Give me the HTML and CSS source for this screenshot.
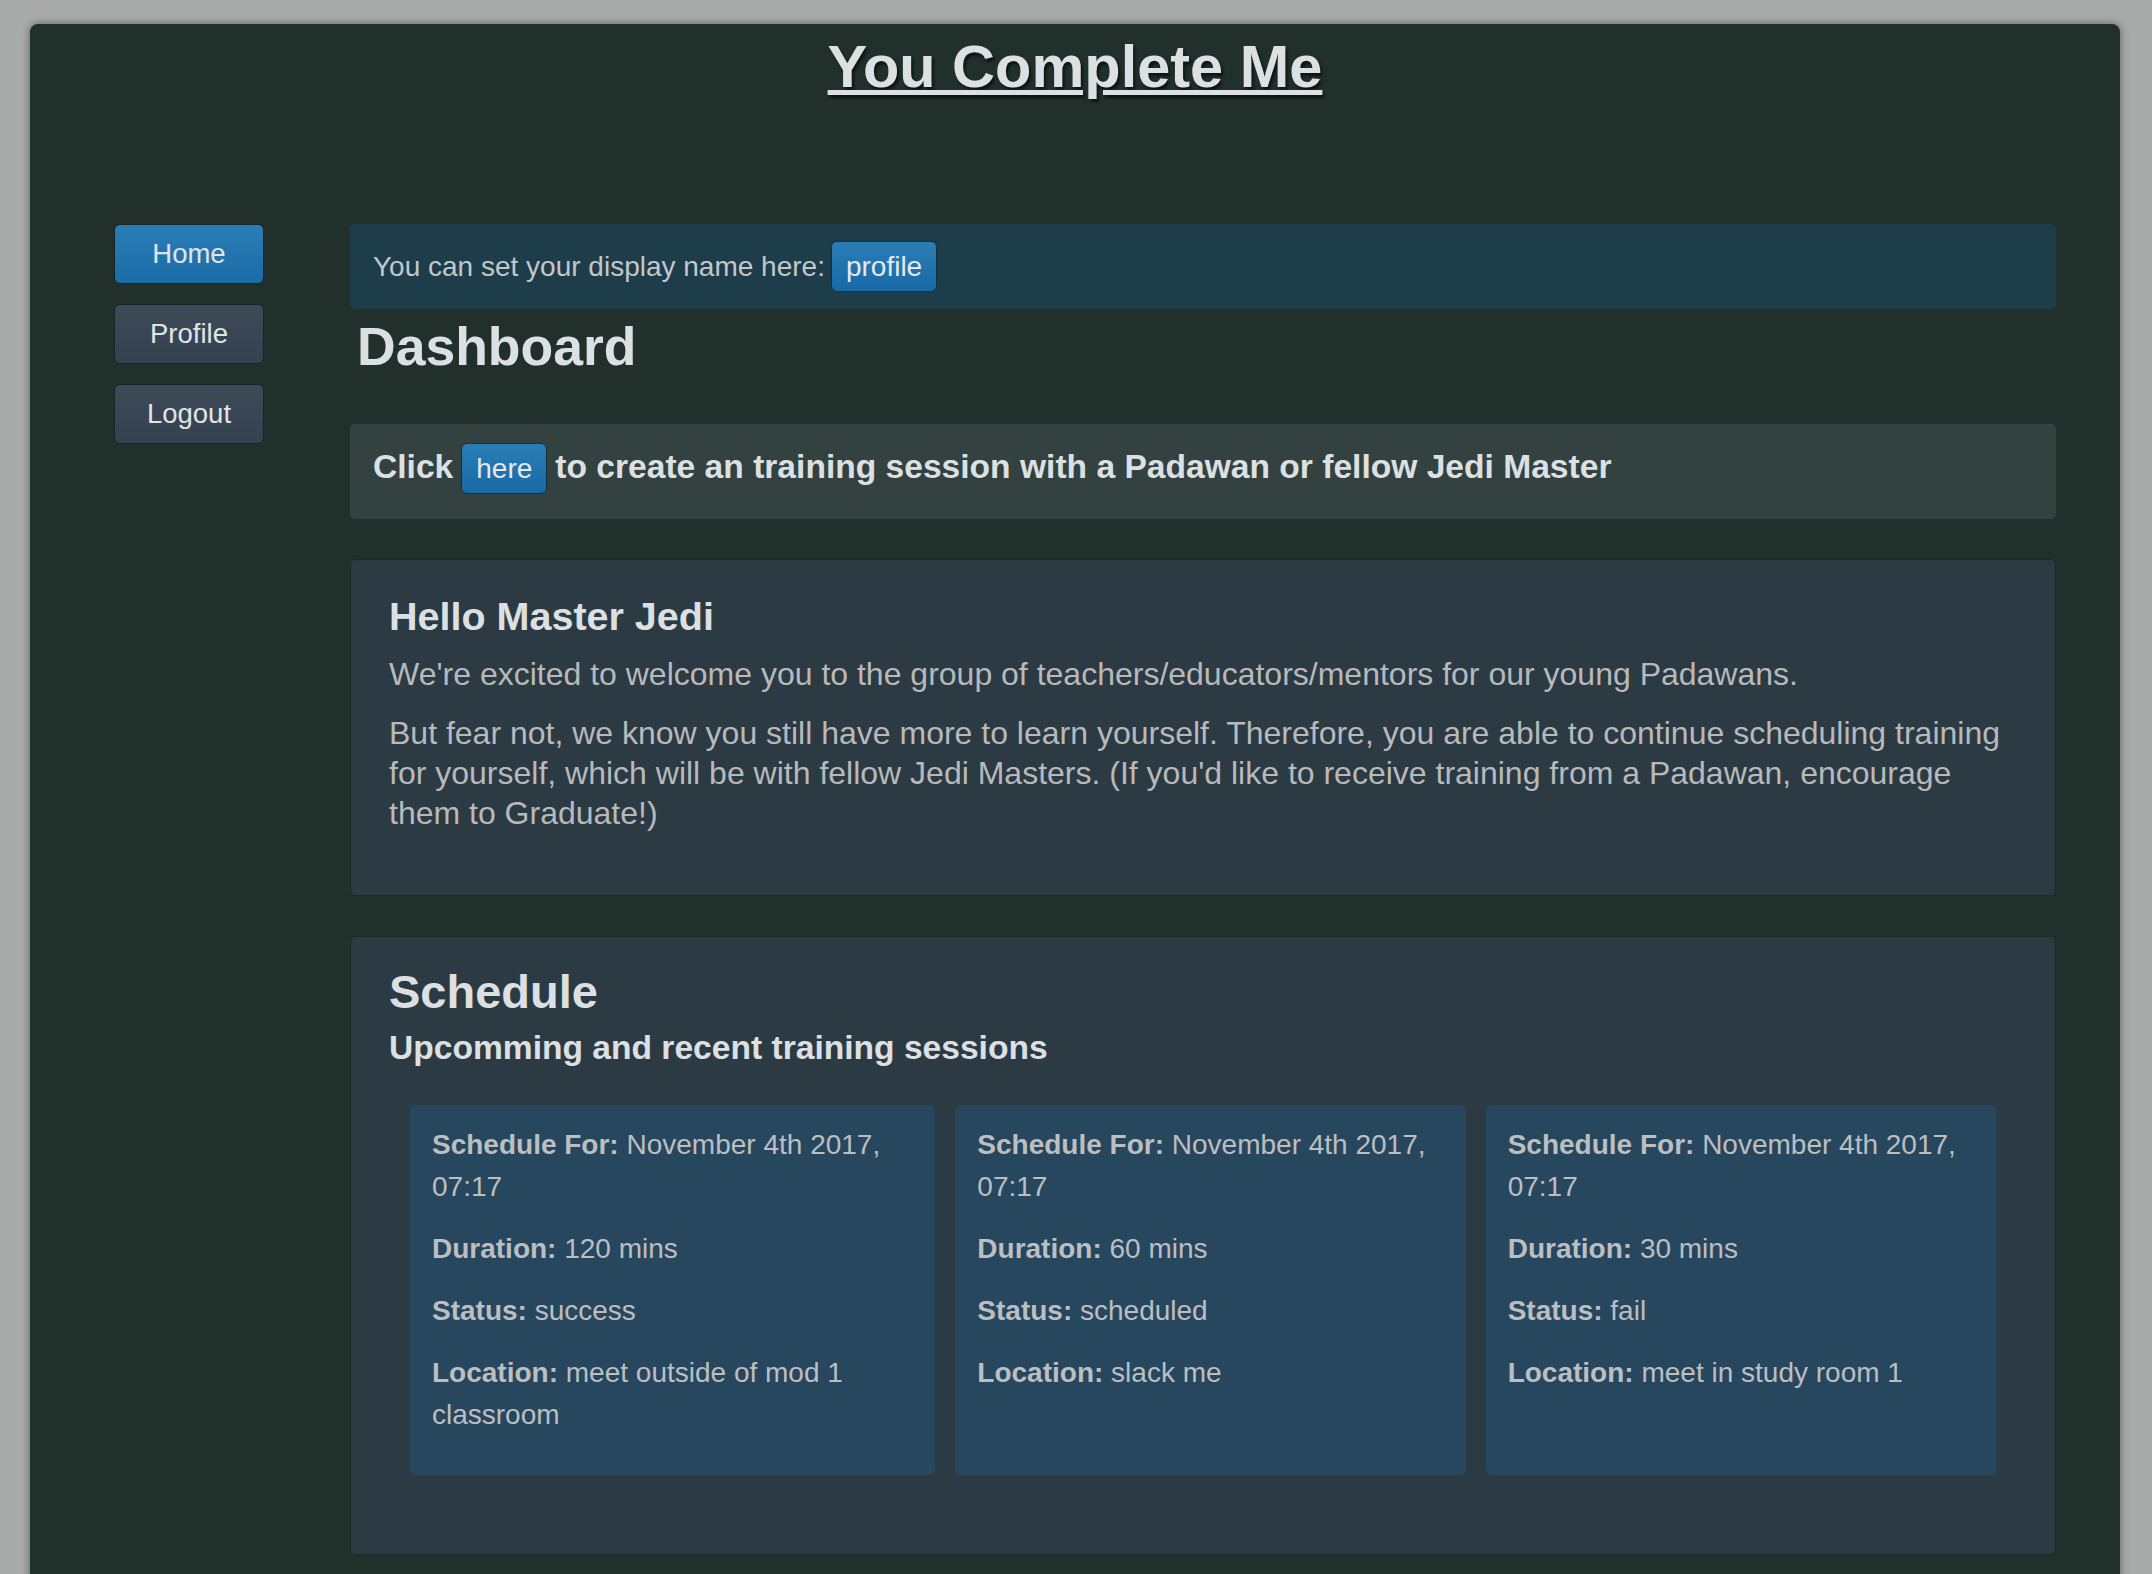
FILE: index.html
```html
<!DOCTYPE html>
<html lang="en">
<head>
<meta charset="utf-8">
<title>You Complete Me</title>
<link rel="stylesheet" href="styles.css">
</head>
<body>
<div class="app">
  <header class="masthead">
    <h1 class="brand"><a class="brand-link" href="#">You Complete Me</a></h1>
  </header>
  <div class="layout">
    <nav class="sidenav">
      <a class="navbtn navbtn-active" href="#">Home</a>
      <a class="navbtn" href="#">Profile</a>
      <a class="navbtn" href="#">Logout</a>
    </nav>
    <main class="main">
      <div class="notice">
        <span class="notice-text">You can set your display name here:</span>
        <a class="pill" href="#">profile</a>
      </div>
      <h1 class="page-title">Dashboard</h1>
      <div class="cta">
        <span class="cta-text">Click</span>
        <a class="pill" href="#">here</a>
        <span class="cta-text">to create an training session with a Padawan or fellow Jedi Master</span>
      </div>
      <section class="panel panel-welcome">
        <h2 class="panel-title">Hello Master Jedi</h2>
        <p class="panel-text">We're excited to welcome you to the group of teachers/educators/mentors for our young Padawans.</p>
        <p class="panel-text">But fear not, we know you still have more to learn yourself. Therefore, you are able to continue scheduling training for yourself, which will be with fellow Jedi Masters. (If you'd like to receive training from a Padawan, encourage them to Graduate!)</p>
      </section>
      <section class="panel panel-schedule">
        <h2 class="schedule-title">Schedule</h2>
        <h3 class="schedule-sub">Upcomming and recent training sessions</h3>
        <div class="sessions">
          <article class="session">
            <p class="session-line"><b>Schedule For:</b> <span>November 4th 2017, 07:17</span></p>
            <p class="session-line"><b>Duration:</b> <span>120 mins</span></p>
            <p class="session-line"><b>Status:</b> <span>success</span></p>
            <p class="session-line"><b>Location:</b> <span>meet outside of mod 1 classroom</span></p>
          </article>
          <article class="session">
            <p class="session-line"><b>Schedule For:</b> <span>November 4th 2017, 07:17</span></p>
            <p class="session-line"><b>Duration:</b> <span>60 mins</span></p>
            <p class="session-line"><b>Status:</b> <span>scheduled</span></p>
            <p class="session-line"><b>Location:</b> <span>slack me</span></p>
          </article>
          <article class="session">
            <p class="session-line"><b>Schedule For:</b> <span>November 4th 2017, 07:17</span></p>
            <p class="session-line"><b>Duration:</b> <span>30 mins</span></p>
            <p class="session-line"><b>Status:</b> <span>fail</span></p>
            <p class="session-line"><b>Location:</b> <span>meet in study room 1</span></p>
          </article>
        </div>
      </section>
    </main>
  </div>
</div>
</body>
</html>
```
FILE: styles.css
```css
html {
  overflow: hidden;
}

body {
  margin: 0;
  background: #a9abaa;
  font-family: "Liberation Sans", Arial, Helvetica, sans-serif;
  color: #dde0e3;
}

.app {
  margin: 24px 32px 0 30px;
  min-height: calc(100vh - 24px);
  padding: 9px 0 40px;
  box-sizing: border-box;
  background: #21302b;
  border-radius: 8px 8px 0 0;
  box-shadow: 0 0 8px rgba(0, 0, 0, 0.45);
}

.masthead {
  text-align: center;
}

.brand {
  margin: 0 0 123px;
  font-size: 59.5px;
  line-height: 68px;
  font-weight: bold;
}

.brand-link {
  color: #dde0e3;
  text-decoration: underline;
  text-shadow: 2px 3px 3px rgba(0, 0, 0, 0.6);
}

.layout {
  display: flex;
  align-items: flex-start;
  gap: 86px;
  padding: 0 64px 0 84px;
}

.sidenav {
  flex: 0 0 150px;
  display: flex;
  flex-direction: column;
  gap: 20px;
}

.navbtn {
  display: block;
  height: 60px;
  box-sizing: border-box;
  border: 1px solid #1a2424;
  border-radius: 6px;
  background: linear-gradient(#3d4b59, #334150);
  color: #e1e4e7;
  font-size: 27.5px;
  line-height: 58px;
  text-align: center;
  text-decoration: none;
}

.navbtn-active {
  background: linear-gradient(#2b7db6, #1a6ca8);
}

.main {
  flex: 1 1 auto;
  min-width: 0;
}

.notice {
  display: flex;
  align-items: baseline;
  gap: 6px;
  padding: 17px 23px;
  background: #1e3d4a;
  border-radius: 5px;
}

.notice-text {
  font-size: 28px;
  color: #c3c7ca;
}

.pill {
  display: inline-block;
  padding: 8px 14px;
  border: 1px solid #17303d;
  border-radius: 6px;
  background: linear-gradient(#2b7db6, #176aa6);
  color: #e6e9ec;
  font-size: 28px;
  line-height: 33px;
  font-weight: normal;
  text-decoration: none;
}

.page-title {
  margin: 7px 0 46px;
  padding-left: 7px;
  font-size: 53.5px;
  line-height: 62px;
  font-weight: bold;
  color: #dde0e3;
}

.cta {
  display: flex;
  align-items: baseline;
  gap: 8px;
  padding: 19px 23px 25px;
  background: #334141;
  border-radius: 5px;
}

.cta-text {
  font-size: 33.6px;
  font-weight: bold;
  color: #dde0e3;
}

.panel {
  margin-top: 40px;
  border: 1px solid #1c2828;
  border-radius: 5px;
  background: #2c3a44;
  padding: 33px 38px 43px;
}

.panel-title {
  margin: 0 0 15px;
  font-size: 39.5px;
  line-height: 46px;
  font-weight: bold;
  color: #dde0e3;
}

.panel-text {
  margin: 0 0 19px;
  font-size: 32px;
  line-height: 40px;
  color: #b7b9bb;
}

.panel-schedule {
  padding: 28px 38px 79px;
}

.schedule-title {
  margin: 0;
  font-size: 47px;
  line-height: 54px;
  font-weight: bold;
  color: #dde0e3;
}

.schedule-sub {
  margin: 9px 0 37px;
  font-size: 33.6px;
  line-height: 40px;
  font-weight: bold;
  color: #dde0e3;
}

.sessions {
  display: grid;
  grid-template-columns: 525fr 510fr 510fr;
  gap: 20px;
  margin: 0 21px;
}

.session {
  padding: 19px 22px 39px;
  background: #27475f;
  border-radius: 5px;
}

.session-line {
  margin: 0 0 20px;
  font-size: 28px;
  line-height: 42px;
  color: #bcbec0;
}

.session-line:last-child {
  margin-bottom: 0;
}

.session-line b {
  font-weight: bold;
}
```
